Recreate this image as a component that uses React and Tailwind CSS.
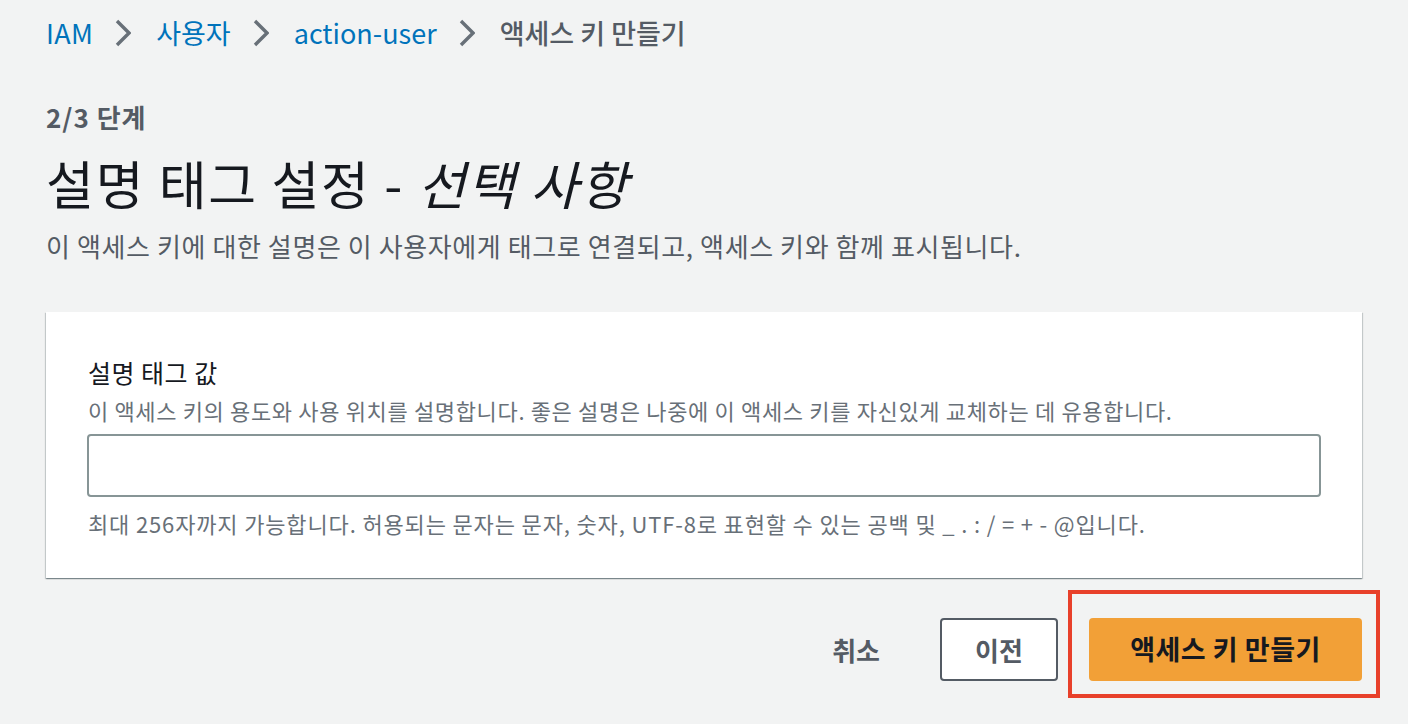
import React from "react";

function Chevron() {
  return (
    <svg width="16" height="28" viewBox="0 0 16 28" className="ml-[22px] mr-[25px]" aria-hidden="true">
      <polyline points="2,2 14,14 2,26" fill="none" stroke="#687078" strokeWidth="3.4" strokeLinecap="butt" strokeLinejoin="miter" />
    </svg>
  );
}

export default function App() {
  return (
    <div className="min-h-[724px] w-full bg-[#f2f3f3] font-['Noto_Sans_CJK_KR','Noto_Sans',sans-serif] text-[#16191f]">
      <div className="px-[46px]">
        {/* Breadcrumb */}
        <div className="flex h-[66px] items-center text-[27px]">
          <span className="tracking-[0.3px] text-[#0073bb]">IAM</span>
          <Chevron />
          <span className="text-[#0073bb]">사용자</span>
          <Chevron />
          <span className="text-[#0073bb]">action-user</span>
          <Chevron />
          <span className="font-medium text-[#545b64]">액세스 키 만들기</span>
        </div>

        {/* Step */}
        <div className="mt-[36px] text-[26px] font-bold leading-[30px] tracking-[1px] text-[#545b64]">2/3 단계</div>

        {/* Title */}
        <h1 className="mt-[21px] text-[52px] font-normal leading-[60px] tracking-[1.8px] text-[#16191f]">
          설명 태그 설정 - <i>선택 사항</i>
        </h1>

        {/* Description */}
        <p className="mt-[16px] text-[26px] leading-[34px] tracking-[0.6px] text-[#545b64]">
          이 액세스 키에 대한 설명은 이 사용자에게 태그로 연결되고, 액세스 키와 함께 표시됩니다.
        </p>

        {/* Card */}
        <div className="mt-[49px] bg-white px-[41px] pb-[40px] pt-[43px] shadow-[0_1px_1px_0_rgba(0,28,36,0.3),1px_1px_1px_0_rgba(0,28,36,0.15),-1px_1px_1px_0_rgba(0,28,36,0.15)]">
          <div className="pl-[1px] text-[25px] leading-[34px] tracking-[0.5px] text-[#16191f]">설명 태그 값</div>
          <div className="mt-[6px] pl-[1px] text-[22px] leading-[30px] tracking-[0.65px] text-[#687078]">
            이 액세스 키의 용도와 사용 위치를 설명합니다. 좋은 설명은 나중에 이 액세스 키를 자신있게 교체하는 데 유용합니다.
          </div>
          <input
            type="text"
            className="mt-[9px] block h-[63px] w-full rounded-[4px] border-2 border-[#879596] bg-white px-4 text-[22px] outline-none"
          />
          <div className="mt-[11px] pl-[1px] text-[22px] leading-[30px] tracking-[0.85px] text-[#687078]">
            최대 256자까지 가능합니다. 허용되는 문자는 문자, 숫자, UTF-8로 표현할 수 있는 공백 및 _ . : / = + - @입니다.
          </div>
        </div>

        {/* Buttons */}
        <div className="mt-[40px] flex items-center justify-end gap-[31px]">
          <button className="h-[63px] pl-[20px] pr-[29px] text-[26px] font-bold text-[#545b64]">취소</button>
          <button className="h-[63px] w-[118px] rounded-[4px] border-2 border-[#545b64] bg-white text-[26px] font-bold text-[#545b64]">
            이전
          </button>
          <div className="relative">
            <button className="h-[63px] w-[273px] rounded-[4px] bg-[#f2a037] text-[27px] font-bold tracking-[0.5px] text-[#16191f]">
              액세스 키 만들기
            </button>
            <div className="pointer-events-none absolute -bottom-[17px] -left-[21px] -right-[18px] -top-[28px] border-[4px] border-[#e8402a]" />
          </div>
        </div>
      </div>
    </div>
  );
}
